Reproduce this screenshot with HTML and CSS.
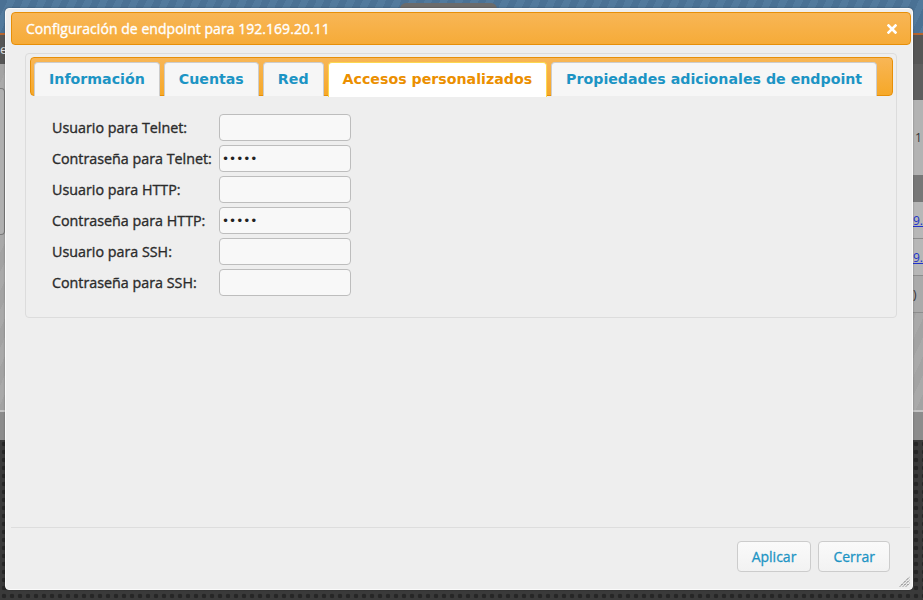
FILE: index.html
```html
<!DOCTYPE html>
<html lang="es">
<head>
<meta charset="utf-8">
<title>Configuración de endpoint</title>
<link rel="stylesheet" href="styles.css">
</head>
<body>
<div class="backdrop">
  <div class="bg-top"><div class="bg-tab"></div></div>
  <div class="bg-bar"><span class="bg-bar-text">el</span></div>
  <div class="bg-main">
    <div class="bg-left"><div class="bg-leftpanel"></div></div>
    <div class="bg-right">
      <div class="br-dark"></div>
      <div class="br-light"><span class="br-num">1</span></div>
      <div class="br-head"></div>
      <div class="br-row"><span class="br-link">9.</span></div>
      <div class="br-row"><span class="br-link">9.</span></div>
      <div class="br-row br-last"><span class="br-num">)</span></div>
    </div>
  </div>
  <div class="bg-line"></div>
  <div class="bg-sub"></div>
  <div class="bg-dark"></div>
</div>

<div class="dialog">
  <div class="titlebar">
    <span class="title">Configuración de endpoint para 192.169.20.11</span>
    <span class="close" aria-label="cerrar">
      <svg width="10" height="10" viewBox="0 0 10 10"><path d="M1.5 1.5 L8.5 8.5 M8.5 1.5 L1.5 8.5" stroke="#fff" stroke-width="2.6" stroke-linecap="square"/></svg>
    </span>
  </div>
  <div class="dialog-body">
    <div class="tabs">
      <ul class="tabnav">
        <li class="tab">Información</li>
        <li class="tab">Cuentas</li>
        <li class="tab">Red</li>
        <li class="tab active">Accesos personalizados</li>
        <li class="tab">Propiedades adicionales de endpoint</li>
      </ul>
      <div class="tabpanel">
        <table class="form">
          <tr><td class="lbl">Usuario para Telnet:</td><td><input class="field" type="text"></td></tr>
          <tr><td class="lbl">Contraseña para Telnet:</td><td><input class="field" type="password" value="xxxxx"></td></tr>
          <tr><td class="lbl">Usuario para HTTP:</td><td><input class="field" type="text"></td></tr>
          <tr><td class="lbl">Contraseña para HTTP:</td><td><input class="field" type="password" value="xxxxx"></td></tr>
          <tr><td class="lbl">Usuario para SSH:</td><td><input class="field" type="text"></td></tr>
          <tr><td class="lbl">Contraseña para SSH:</td><td><input class="field" type="password"></td></tr>
        </table>
      </div>
    </div>
  </div>
  <div class="buttonpane">
    <button class="btn">Aplicar</button>
    <button class="btn">Cerrar</button>
  </div>
  <span class="grip">
    <svg width="11" height="11" viewBox="0 0 11 11"><path d="M1 10.5 L10.5 1 M4 10.5 L10.5 4 M7 10.5 L10.5 7" stroke="#555" stroke-width="1" stroke-dasharray="1.4 0.8"/></svg>
  </span>
</div>
</body>
</html>
```
FILE: styles.css
```css
html, body {
  margin: 0;
  padding: 0;
  height: 600px;
  overflow: hidden;
}
body {
  font-family: "Open Sans", "DejaVu Sans", sans-serif;
  background: #383838;
}

/* ---------- background page ---------- */
.backdrop {
  height: 600px;
  display: flex;
  flex-direction: column;
}
.bg-top {
  height: 33px;
  background: repeating-linear-gradient(115deg, #4a7194 0 7px, #527a9d 7px 14px);
}
.bg-tab {
  margin: 3px 0 0 400px;
  width: 97px;
  height: 10px;
  background: #6b6b6b;
  border-radius: 6px 6px 0 0;
}
.bg-bar {
  height: 29px;
  background: #565656;
  border-top: 2px solid #b5642e;
  color: #ddd;
  font-size: 13px;
  line-height: 28px;
}
.bg-main {
  height: 346px;
  display: flex;
  justify-content: space-between;
  background: repeating-linear-gradient(115deg, #a3a3a3 0 8px, #a9a9a9 8px 16px);
}
.bg-left { width: 6px; }
.bg-leftpanel {
  margin-top: 24px;
  height: 145px;
  width: 4px;
  border: 1px solid #7a7a7a;
  border-left: 0;
  border-radius: 0 4px 4px 0;
  background: #b0b0b0;
}
.bg-right {
  width: 10px;
  display: flex;
  flex-direction: column;
}
.br-dark { height: 36px; background: #5e5e5e; }
.br-light {
  height: 75px;
  background: #b3b3b3;
  font-size: 13px;
  color: #333;
  display: flex;
  align-items: center;
  padding-left: 2px;
}
.br-head { height: 27px; background: #777; }
.br-row {
  height: 36px;
  border-bottom: 1px solid #8d8d8d;
  background: #b7b7b7;
  display: flex;
  align-items: center;
  font-size: 12px;
}
.br-last { background: #aaa; }
.br-link { color: #2233cc; text-decoration: underline; }
.br-num { color: #333; font-size: 12px; }
.bg-line { height: 2px; background: #c4c4c4; }
.bg-sub { height: 28px; background: #8c8c8c; }
.bg-dark {
  flex: 1;
  background-color: #3a3a3a;
  background-image: radial-gradient(circle, #262626 2px, transparent 2.6px);
  background-size: 8px 8px;
}

/* ---------- dialog ---------- */
.dialog {
  position: absolute;
  left: 5px;
  top: 8px;
  width: 908px;
  height: 582px;
  box-sizing: border-box;
  background: #eeeeee;
  border: 1px solid #fafafa;
  border-radius: 4px;
  box-shadow: 0 0 2px rgba(0,0,0,0.35);
  padding: 3px 1px 0 5px;
  display: flex;
  flex-direction: column;
}
.titlebar {
  height: 33px;
  box-sizing: border-box;
  border: 1px solid #e78f08;
  border-radius: 4px;
  background: linear-gradient(#f8b656, #f6ab38);
  display: flex;
  align-items: center;
  justify-content: space-between;
  padding: 0 13px 0 14px;
}
.title {
  color: #fff;
  font-size: 14px;
  -webkit-text-stroke: 0.35px #fff;
  letter-spacing: 0.04px;
}
.close { display: flex; }

.dialog-body {
  flex: 1;
  padding: 8px 14px 0 14px;
}
.tabs {
  border: 1px solid #dcdcdc;
  border-radius: 4px;
  background: #eeeeee;
  padding: 3px 3px 0 4px;
}
.tabnav {
  list-style: none;
  margin: 0;
  height: 39px;
  box-sizing: border-box;
  padding: 4px 0 0 3px;
  border: 1px solid #e78f08;
  border-radius: 4px;
  background: linear-gradient(#f8b656, #f6a828);
  display: flex;
  gap: 4px;
}
.tab {
  height: 34px;
  box-sizing: border-box;
  padding: 0 14px;
  border: 1px solid #cccccc;
  border-bottom: 0;
  border-radius: 4px 4px 0 0;
  background: #f6f6f6;
  color: #1c94c4;
  font-family: "DejaVu Sans", Verdana, sans-serif;
  font-weight: bold;
  font-size: 14.2px;
  line-height: 32px;
  white-space: nowrap;
}
.tab.active {
  height: 35px;
  background: #ffffff;
  border-color: #fbd850;
  color: #eb8f00;
}
.tabpanel {
  padding: 16px 0 19px 22px;
}
.form {
  border-collapse: collapse;
}
.form td {
  padding: 2px 0;
  vertical-align: middle;
}
.lbl {
  width: 167px;
  color: #2b2b2b;
  font-size: 14.3px;
  -webkit-text-stroke: 0.35px #2b2b2b;
  white-space: nowrap;
}
.field {
  display: block;
  width: 132px;
  height: 27px;
  box-sizing: border-box;
  margin: 0;
  border: 1px solid #bdbdbd;
  border-radius: 4px;
  background: #f8f8f8;
  padding: 0 2px;
  font-family: "DejaVu Sans", sans-serif;
  font-size: 12px;
  color: #222;
  outline: none;
}

.buttonpane {
  height: 62px;
  box-sizing: border-box;
  border-top: 1px solid #dddddd;
  margin-right: 1px;
  padding: 13px 20px 0 0;
  display: flex;
  justify-content: flex-end;
  align-items: flex-start;
  gap: 7px;
}
.btn {
  height: 31px;
  box-sizing: border-box;
  padding: 0 14px;
  border: 1px solid #cccccc;
  border-radius: 4px;
  background: linear-gradient(#fafafa, #f2f2f2);
  color: #1c94c4;
  font-family: "Open Sans", sans-serif;
  font-size: 14px;
  -webkit-text-stroke: 0.3px #1c94c4;
}
.grip {
  position: absolute;
  right: 2px;
  bottom: 2px;
  display: flex;
}
```
